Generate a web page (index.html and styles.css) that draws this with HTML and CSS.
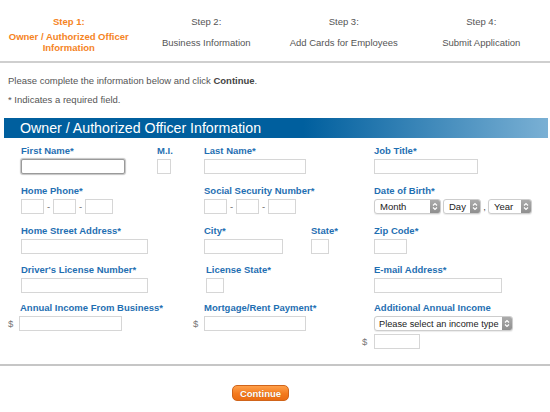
FILE: index.html
```html
<!DOCTYPE html>
<html lang="en">
<head>
    <meta charset="UTF-8">
    <meta name="viewport" content="width=device-width, initial-scale=1.0">
    <title>Owner / Authorized Officer Information</title>
    <link rel="stylesheet" href="styles.css">
</head>
<body>
    <div class="steps">
        <div class="step active">
            <div class="step-title">Step 1:</div>
            <div class="step-desc">Owner / Authorized Officer<br>Information</div>
        </div>
        <div class="step">
            <div class="step-title">Step 2:</div>
            <div class="step-desc">Business Information</div>
        </div>
        <div class="step">
            <div class="step-title">Step 3:</div>
            <div class="step-desc">Add Cards for Employees</div>
        </div>
        <div class="step">
            <div class="step-title">Step 4:</div>
            <div class="step-desc">Submit Application</div>
        </div>
    </div>

    <div class="intro">
        <p>Please complete the information below and click <strong>Continue</strong>.</p>
        <p class="note">* Indicates a required field.</p>
    </div>

    <h2 class="section-bar">Owner / Authorized Officer Information</h2>

    <form class="owner-form">
        <!-- row 1 -->
        <div class="field c1only">
            <label for="first_name">First Name*</label>
            <input type="text" id="first_name" class="w104 focused">
        </div>
        <div class="field c2">
            <label for="mi">M.I.</label>
            <input type="text" id="mi" class="w13">
        </div>
        <div class="field c3">
            <label for="last_name">Last Name*</label>
            <input type="text" id="last_name" class="w102">
        </div>
        <div class="field c5">
            <label for="job_title">Job Title*</label>
            <input type="text" id="job_title" class="w104">
        </div>

        <!-- row 2 -->
        <div class="field c1">
            <label for="phone1">Home Phone*</label>
            <div class="split">
                <input type="text" id="phone1" class="w22">
                <span class="dash">-</span>
                <input type="text" class="w22">
                <span class="dash">-</span>
                <input type="text" class="w28">
            </div>
        </div>
        <div class="field c3">
            <label for="ssn1">Social Security Number*</label>
            <div class="split">
                <input type="text" id="ssn1" class="w22">
                <span class="dash">-</span>
                <input type="text" class="w22">
                <span class="dash">-</span>
                <input type="text" class="w28">
            </div>
        </div>
        <div class="field c5">
            <label>Date of Birth*</label>
            <div class="split">
                <span class="select w67"><select><option>Month</option></select><span class="arrows"><svg width="10" height="13" viewBox="0 0 10 13"><path d="M3 5.5 L5 3.5 L7 5.5 M3 7.5 L5 9.5 L7 7.5"/></svg></span></span>
                <span class="select w38 day"><select><option>Day</option></select><span class="arrows"><svg width="10" height="13" viewBox="0 0 10 13"><path d="M3 5.5 L5 3.5 L7 5.5 M3 7.5 L5 9.5 L7 7.5"/></svg></span></span>
                <span class="comma">,</span>
                <span class="select w44"><select><option>Year</option></select><span class="arrows"><svg width="10" height="13" viewBox="0 0 10 13"><path d="M3 5.5 L5 3.5 L7 5.5 M3 7.5 L5 9.5 L7 7.5"/></svg></span></span>
            </div>
        </div>

        <!-- row 3 -->
        <div class="field c1">
            <label for="street">Home Street Address*</label>
            <input type="text" id="street" class="w127">
        </div>
        <div class="field c3only">
            <label for="city">City*</label>
            <input type="text" id="city" class="w79">
        </div>
        <div class="field c4">
            <label for="state">State*</label>
            <input type="text" id="state" class="w18">
        </div>
        <div class="field c5">
            <label for="zip">Zip Code*</label>
            <input type="text" id="zip" class="w33">
        </div>

        <!-- row 4 -->
        <div class="field c1">
            <label for="dl">Driver's License Number*</label>
            <input type="text" id="dl" class="w127">
        </div>
        <div class="field c3">
            <label for="dl_state" class="nudge">License State*</label>
            <input type="text" id="dl_state" class="w18 nudge">
        </div>
        <div class="field c5">
            <label for="email">E-mail Address*</label>
            <input type="text" id="email" class="w128">
        </div>

        <!-- row 5 -->
        <div class="field c1">
            <label for="income" class="pull">Annual Income From Business*</label>
            <div class="money">
                <span class="cur">$</span>
                <input type="text" id="income" class="w103">
            </div>
        </div>
        <div class="field c3">
            <label for="rent">Mortgage/Rent Payment*</label>
            <div class="money mid">
                <span class="cur">$</span>
                <input type="text" id="rent" class="w102">
            </div>
        </div>
        <div class="field c5">
            <label>Additional Annual Income</label>
            <span class="select w139"><select class="tight"><option>Please select an income type</option></select><span class="arrows"><svg width="10" height="13" viewBox="0 0 10 13"><path d="M3 5.5 L5 3.5 L7 5.5 M3 7.5 L5 9.5 L7 7.5"/></svg></span></span>
            <div class="money extra">
                <span class="cur">$</span>
                <input type="text" class="w46">
            </div>
        </div>
    </form>

    <div class="form-footer">
        <button type="button" class="btn-continue">Continue</button>
    </div>
</body>
</html>
```

FILE: styles.css
```css
body {
    margin: 0;
    font-family: "Liberation Sans", Arial, sans-serif;
    font-size: 9.5px;
    color: #555;
    background: #fff;
}

/* step indicator */
.steps {
    display: flex;
    padding: 16px 0 8px;
    border-bottom: 2px solid #cfcfcf;
}
.step {
    flex: 1;
    text-align: center;
    line-height: 11px;
}
.step-desc {
    height: 22px;
    margin-top: 4px;
    display: flex;
    align-items: center;
    justify-content: center;
}
.step.active {
    color: #f5841f;
    font-weight: bold;
}

/* intro */
.intro {
    padding: 12px 8px 0;
}
.intro p {
    margin: 0;
    line-height: 11px;
}
.intro .note {
    margin-top: 8px;
}
.intro strong {
    color: #444;
}

/* blue section bar */
.section-bar {
    margin: 13px 2px 0 4px;
    height: 20px;
    line-height: 20px;
    padding-left: 16px;
    font-size: 14.2px;
    font-weight: normal;
    color: #fff;
    background: linear-gradient(to right, #005f9e 0%, #005f9e 55%, #7ab0d4 100%);
}

/* form grid */
.owner-form {
    display: grid;
    grid-template-columns: 136px 47px 107px 63px 1fr;
    grid-template-rows: 40px 40px 39px 38px auto;
    margin-top: 7px;
    padding-left: 21px;
}
.field label {
    display: block;
    color: #1f6fb2;
    font-weight: bold;
    line-height: 11px;
    margin-bottom: 3px;
    white-space: nowrap;
}
.c1 { grid-column: 1 / 3; }
.c1only { grid-column: 1; }
.c2 { grid-column: 2; }
.c3 { grid-column: 3 / 5; }
.c3only { grid-column: 3; }
.c4 { grid-column: 4; }
.c5 { grid-column: 5; }

.field input {
    display: block;
    box-sizing: border-box;
    height: 15px;
    border: 1px solid #d6d6d6;
    border-radius: 0;
    padding: 0 2px;
    margin: 0;
    font: 9.5px "Liberation Sans", Arial, sans-serif;
    background: #fff;
    outline: none;
}
.field input.focused {
    border: 1px solid #9a9a9a;
    border-radius: 2px;
    box-shadow: 0 0 1px 1px #c4c4c4;
}
.nudge { margin-left: 2px !important; }
.pull { margin-left: -1px; }

.w13 { width: 14px; }
.w18 { width: 18px; }
.w22 { width: 23px; }
.w28 { width: 28px; }
.w33 { width: 33px; }
.w46 { width: 46px; }
.w79 { width: 79px; }
.w102 { width: 102px; }
.w103 { width: 103px; }
.w104 { width: 104px; }
.w127 { width: 127px; }
.w128 { width: 128px; }

.split {
    display: flex;
    align-items: center;
}
.split input {
    flex: none;
}
.dash {
    width: 9px;
    text-align: center;
    color: #666;
}
.comma {
    width: 7px;
    text-align: center;
    color: #444;
}

/* select boxes */
.select {
    display: flex;
    box-sizing: border-box;
    height: 15px;
    border: 1px solid #cdcdcd;
    border-radius: 3px;
    background: #fff;
    box-shadow: 0 1px 1px rgba(0, 0, 0, 0.08);
    overflow: hidden;
}
.select.day { margin-left: 2px; }
.w67 { width: 67px; }
.w38 { width: 38px; }
.w44 { width: 44px; }
.w139 { width: 139px; }
.select select {
    flex: 1;
    min-width: 0;
    appearance: none;
    -webkit-appearance: none;
    border: none;
    background: transparent;
    padding: 0 0 0 5px;
    margin: 0;
    font: 9.5px "Liberation Sans", Arial, sans-serif;
    color: #222;
    outline: none;
}
.select select.tight {
    padding-left: 4px;
    font-size: 9.2px;
}
.arrows {
    flex: none;
    width: 10px;
    display: flex;
    align-items: center;
    justify-content: center;
    background: linear-gradient(#ababab, #8f8f8f);
}
.arrows svg path {
    fill: none;
    stroke: #fff;
    stroke-width: 1.2;
}

/* money inputs */
.money {
    display: flex;
    align-items: center;
    margin-left: -13px;
}
.money .cur {
    width: 11px;
    color: #777;
}
.money.mid {
    margin-left: -11px;
}
.money.extra {
    margin-top: 3px;
    margin-left: -12px;
}
.money.extra .cur {
    width: 12px;
}

/* footer */
.form-footer {
    margin-top: 15px;
    border-top: 2px solid #c6c6c6;
    padding: 19px 29px 0 0;
    text-align: center;
}
.btn-continue {
    width: 57px;
    height: 16px;
    padding: 0;
    border: 1px solid #d0641a;
    border-radius: 5px;
    background: linear-gradient(#ffa04a, #f47a1e 55%, #ea6c12);
    color: #fff;
    font: bold 9.5px "Liberation Sans", Arial, sans-serif;
    text-shadow: 0 0 1px #b5560f;
}
```
